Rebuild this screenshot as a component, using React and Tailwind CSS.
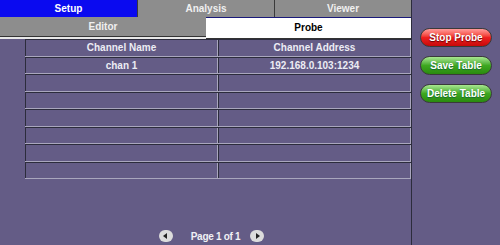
export default function App() {
  const rows = [["chan 1", "192.168.0.103:1234"], ["", ""], ["", ""], ["", ""], ["", ""], ["", ""], ["", ""]];
  const font = { fontFamily: '"Liberation Sans", Arial, sans-serif' };
  return (
    <div className="w-[500px] h-[245px] bg-[#645c86] flex overflow-hidden font-bold text-[10px]" style={font}>
      <div className="w-[411px] flex flex-col">
        <div className="h-[17px] flex">
          <div className="w-[137px] bg-[#0a0af0] text-white flex items-center justify-center">Setup</div>
          <div className="w-[137px] bg-[#8d8d8d] text-[#f0f0f0] border-l border-[#3a3a3a] flex items-center justify-center">Analysis</div>
          <div className="flex-1 bg-[#8d8d8d] text-[#f0f0f0] border-l border-[#3a3a3a] flex items-center justify-center">Viewer</div>
        </div>
        <div className="h-[22px] flex">
          <div className="w-[206px] bg-[#8d8d8d] text-[#f0f0f0] flex items-center justify-center border-b-2 border-b-[#e8e8e8] shadow-[inset_0_-1px_0_#333]">
            <span className="-mt-[2px]">Editor</span>
          </div>
          <div className="flex-1 bg-white text-black flex items-center justify-center border-t border-[#1a1a7a] border-b border-b-[#333]">
            <span className="-mt-[1px]">Probe</span>
          </div>
        </div>
        <div className="ml-[25px] w-[386px] text-[#ececf4]">
          {[["Channel Name", "Channel Address"], ...rows].map((r, i) => (
            <div key={i} className="flex h-[17.5px] border-t border-t-[#2c2c3c] border-b border-b-[#a9a6bd]">
              <div className="w-[193px] border-l border-l-[#2c2c3c] border-r border-r-[#a9a6bd] flex items-center justify-center">{r[0]}</div>
              <div className="flex-1 border-l border-l-[#2c2c3c] border-r border-r-[#a9a6bd] flex items-center justify-center">{r[1]}</div>
            </div>
          ))}
        </div>
        <div className="flex-1" />
        <div className="h-[18px] flex items-center justify-center pl-[12px] text-[#f0f0f4]">
          <div className="w-[14px] h-[12px] rounded-full bg-[#dcdcdc] flex items-center justify-center">
            <div className="w-0 h-0 border-y-[3px] border-y-transparent border-r-[4px] border-r-[#222] -ml-[1px]" />
          </div>
          <span className="ml-[18px] mr-[10px] tracking-[-0.3px]">Page 1 of 1</span>
          <div className="w-[14px] h-[12px] rounded-full bg-[#dcdcdc] flex items-center justify-center">
            <div className="w-0 h-0 border-y-[3px] border-y-transparent border-l-[4px] border-l-[#222] ml-[1px]" />
          </div>
        </div>
      </div>
      <div className="flex-1 border-l border-[#2c2c3c] flex flex-col items-center pt-[28px] gap-[9px]">
        <div className="w-[72px] h-[19px] rounded-full border border-[#3a3a3a] bg-gradient-to-b from-[#ff9a9a] via-[#ee2020] to-[#c80808] text-white flex items-center justify-center [text-shadow:0_1px_1px_#600]">Stop Probe</div>
        <div className="w-[72px] h-[19px] rounded-full border border-[#3a3a3a] bg-gradient-to-b from-[#a8e890] via-[#3ea820] to-[#2a8a10] text-white flex items-center justify-center [text-shadow:0_1px_1px_#163]">Save Table</div>
        <div className="w-[72px] h-[19px] rounded-full border border-[#3a3a3a] bg-gradient-to-b from-[#a8e890] via-[#3ea820] to-[#2a8a10] text-white flex items-center justify-center [text-shadow:0_1px_1px_#163]">Delete Table</div>
      </div>
    </div>
  );
}
